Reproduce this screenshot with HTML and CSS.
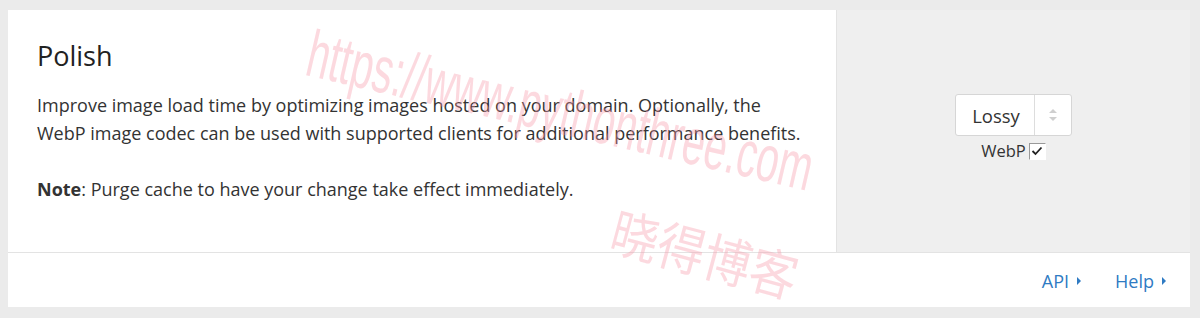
FILE: index.html
```html
<!DOCTYPE html>
<html lang="en">
<head>
    <meta charset="UTF-8">
    <title>Polish</title>
    <link rel="stylesheet" href="styles.css">
</head>
<body>
    <div class="card">
        <div class="card-body">
            <div class="card-content">
                <h3 class="card-title">Polish</h3>
                <p>Improve image load time by optimizing images hosted on your domain. Optionally, the WebP image codec can be used with supported clients for additional performance benefits.</p>
                <p><strong>Note</strong>: Purge cache to have your change take effect immediately.</p>
            </div>
            <div class="card-control">
                <div class="select">
                    <span class="select-value">Lossy</span>
                    <span class="select-arrows">
                        <svg width="10" height="16" viewBox="0 0 10 16">
                            <path d="M1 6 L5 2 L9 6 Z" fill="#cfcfcf"/>
                            <path d="M1 10 L5 14 L9 10 Z" fill="#cfcfcf"/>
                        </svg>
                    </span>
                </div>
                <label class="webp">WebP <span class="checkbox"><svg width="12" height="10" viewBox="0 0 12 10"><path d="M1.5 5 L4.5 8 L10.5 1.5" fill="none" stroke="#222" stroke-width="1.8"/></svg></span></label>
            </div>
        </div>
        <div class="card-footer">
            <a href="#" class="link">API <span class="caret"></span></a>
            <a href="#" class="link">Help <span class="caret"></span></a>
        </div>
        <div class="watermark">
            <span class="wm-url">https://www.pythonthree.com</span>
            <span class="wm-cn">晓得博客</span>
        </div>
    </div>
</body>
</html>
```

FILE: styles.css
```css
body {
    margin: 0;
    padding: 10px 10px 10px 8px;
    background-color: #ebebeb;
    font-family: 'Open Sans', sans-serif;
    color: #333;
}
.card {
    position: relative;
    background-color: #fff;
    overflow: hidden;
}
.card-body {
    display: flex;
    height: 243px;
    border-bottom: 1px solid #e3e3e3;
    box-sizing: border-box;
}
.card-content {
    flex: 1;
    padding: 27px 29px 0;
}
.card-title {
    margin: 0 0 16px;
    font-size: 27px;
    font-weight: 400;
    line-height: 38px;
    color: #222;
}
.card-content p {
    margin: 0 0 28px;
    font-size: 18px;
    line-height: 28px;
}
.card-control {
    width: 354px;
    background-color: #efefef;
    border-left: 1px solid #e3e3e3;
    display: flex;
    flex-direction: column;
    align-items: center;
    padding-top: 84px;
    box-sizing: border-box;
}
.select {
    display: flex;
    width: 117px;
    height: 42px;
    background-color: #fff;
    border: 1px solid #d6d6d6;
    border-radius: 3px;
    box-sizing: border-box;
}
.select-value {
    flex: 1;
    display: flex;
    align-items: center;
    justify-content: center;
    padding-left: 2px;
    font-size: 18.5px;
    border-right: 1px solid #ddd;
}
.select-arrows {
    width: 36px;
    display: flex;
    align-items: center;
    justify-content: center;
}
.webp {
    display: flex;
    align-items: center;
    gap: 3px;
    margin-top: 5px;
    font-size: 16.5px;
    line-height: 20px;
    color: #333;
}
.checkbox {
    display: flex;
    align-items: center;
    justify-content: center;
    width: 15px;
    height: 15px;
    border: 1px solid #999;
    border-right-color: #fff;
    border-bottom-color: #fff;
    background-color: #fff;
}
.card-footer {
    height: 54px;
    display: flex;
    justify-content: flex-end;
    align-items: center;
    gap: 34px;
    padding: 2px 24px 0 0;
    box-sizing: border-box;
}
.link {
    color: #2f7bc3;
    text-decoration: none;
    font-size: 18px;
    display: flex;
    align-items: center;
    gap: 8px;
}
.caret {
    width: 0;
    height: 0;
    border-left: 4px solid #2f7bc3;
    border-top: 4px solid transparent;
    border-bottom: 4px solid transparent;
}
.watermark {
    position: absolute;
    inset: 0;
    pointer-events: none;
    color: rgba(246, 150, 165, 0.36);
    font-family: 'Liberation Sans', sans-serif;
    line-height: 1;
}
.wm-url {
    position: absolute;
    left: 308px;
    top: 10px;
    font-size: 66px;
    white-space: nowrap;
    transform: rotate(13deg) scaleX(0.61);
    transform-origin: left top;
}
.wm-cn {
    position: absolute;
    left: 612px;
    top: 192px;
    font-size: 53px;
    font-family: 'Noto Sans CJK SC', sans-serif;
    white-space: nowrap;
    transform: rotate(15deg) scaleX(0.9);
    transform-origin: left top;
}
```
